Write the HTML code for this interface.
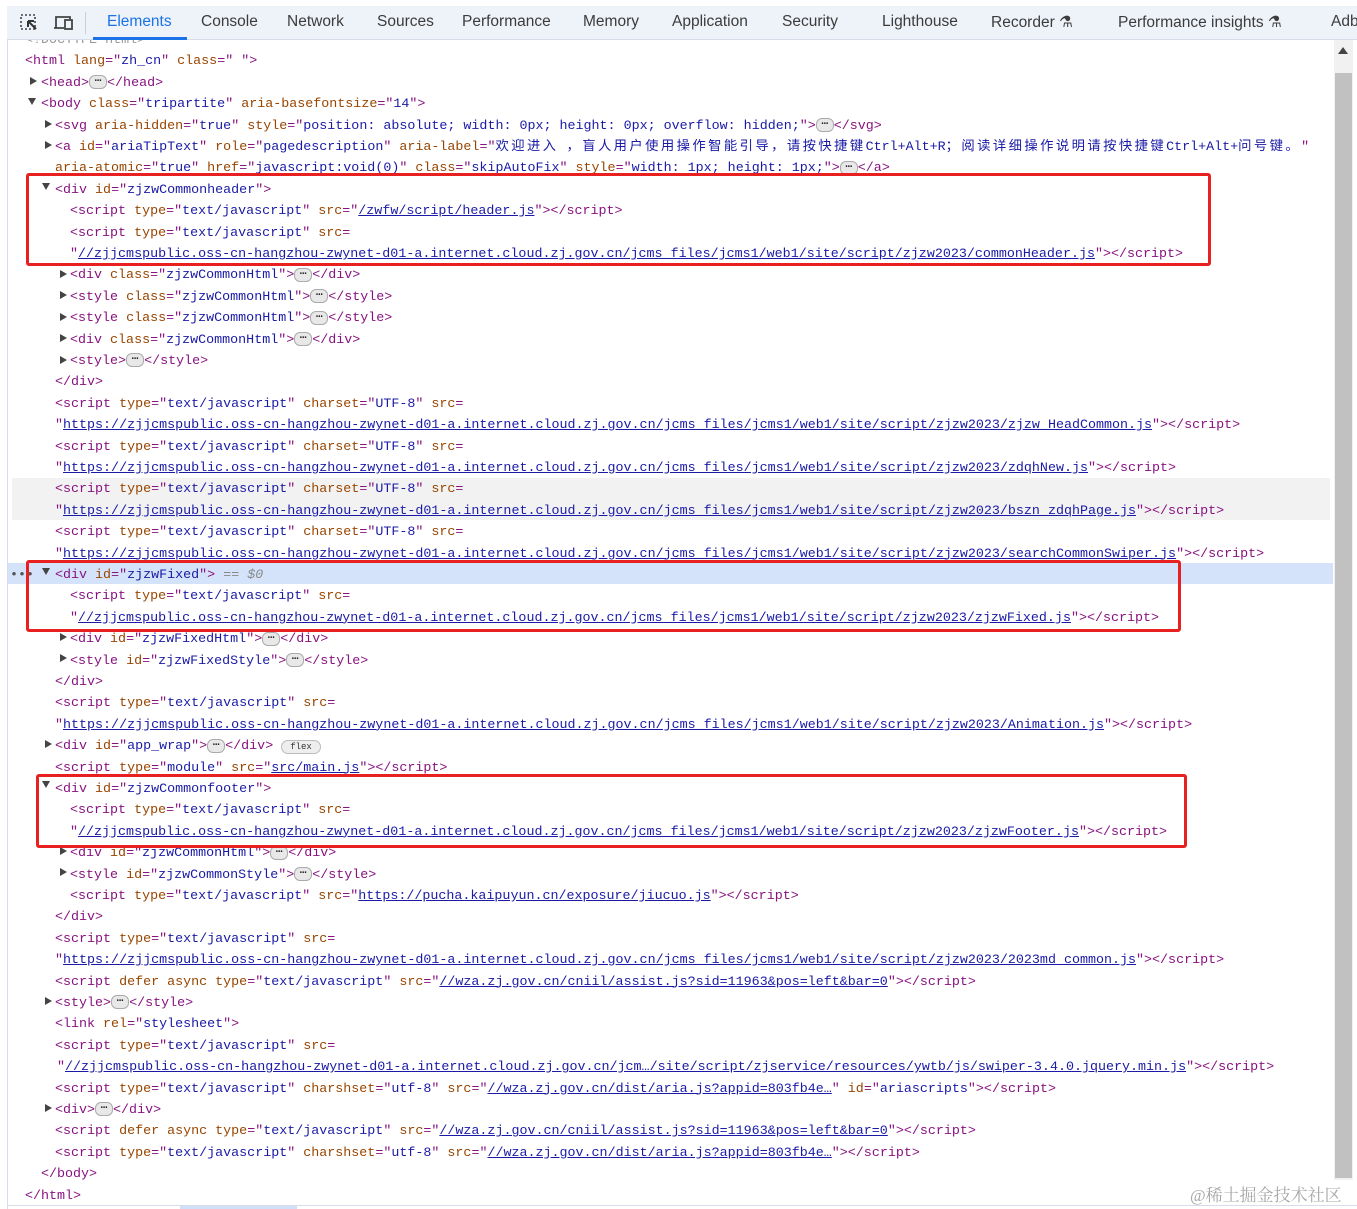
<!DOCTYPE html>
<html><head><meta charset="utf-8"><style>
body{margin:0;width:1357px;height:1209px;overflow:hidden;background:#fff;position:relative;font-family:"Liberation Mono","Noto Sans CJK SC",monospace;}
#bar{position:absolute;left:7px;top:6px;width:1350px;height:33px;background:#eef2f9;border-bottom:1px solid #d6dde8;z-index:5;font-family:"Liberation Sans",sans-serif;font-size:15.5px;color:#3c3c3c;}
#bar span{position:absolute;top:7px;white-space:nowrap}
#bar .act{color:#1a73e8}
#ul{position:absolute;left:86px;top:31px;width:94px;height:3px;background:#1a73e8}
#lb{position:absolute;left:7px;top:40px;width:1px;height:1169px;background:#d6dde8}
.l{position:absolute;margin-top:1px;height:21.4px;line-height:21.4px;font-size:13.35px;white-space:nowrap;color:#881280}
.t{color:#881280}.a{color:#994500}.v{color:#1a1aa6}.u{color:#1a1aa6;text-decoration:underline}
.cj{letter-spacing:2.4px}
.tr{position:absolute;width:0;height:0;border-top:4.5px solid transparent;border-bottom:4.5px solid transparent;border-left:7px solid #444}
.td{position:absolute;width:0;height:0;border-left:4.5px solid transparent;border-right:4.5px solid transparent;border-top:7px solid #444}
.e{display:inline-block;width:16px;height:12px;line-height:7px;border:1px solid #aaa;border-radius:6px;background:#e8e8e8;color:#222;font-size:11px;text-align:center;vertical-align:middle;font-weight:bold}
.box{position:absolute;border:3px solid #e8201f;border-radius:3px;z-index:3}
#sb{position:absolute;left:1334px;top:40px;width:19px;height:1140px;background:#f1f1f1}
#th{position:absolute;left:1335px;top:73px;width:17px;height:1105px;background:#c1c1c1}
</style></head><body>
<div id="bar">
<svg style="position:absolute;left:13px;top:8px" width="20" height="18" viewBox="0 0 20 18"><rect x="1" y="1" width="14" height="14" fill="none" stroke="#444" stroke-width="1.6" stroke-dasharray="2 2"/><path d="M8 7 L16 15 M8 7 L8 13 M8 7 L14 7" stroke="#333" stroke-width="2" fill="none"/></svg>
<svg style="position:absolute;left:46px;top:8px" width="22" height="18" viewBox="0 0 22 18"><path d="M3 14 V3 H17 V5 M1 14 H11" stroke="#444" stroke-width="1.8" fill="none"/><rect x="12" y="6" width="7" height="9" fill="none" stroke="#444" stroke-width="1.8"/></svg>
<div style="position:absolute;left:78px;top:6px;width:1px;height:22px;background:#ccd"></div>
<span class="act" style="left:100px">Elements</span>
<span style="left:194px">Console</span>
<span style="left:280px">Network</span>
<span style="left:370px">Sources</span>
<span style="left:455px">Performance</span>
<span style="left:576px">Memory</span>
<span style="left:665px">Application</span>
<span style="left:775px">Security</span>
<span style="left:875px">Lighthouse</span>
<span style="left:984px">Recorder ⚗</span>
<span style="left:1111px">Performance insights ⚗</span>
<span style="left:1324px">Adb</span>
<div id="ul"></div>
</div>
<div id="lb"></div>
<div id="sb"></div><div id="th"></div>
<svg style="position:absolute;left:1338px;top:47px" width="10" height="7"><path d="M0 7 L5 0 L10 7Z" fill="#444"/></svg>

<div style="position:absolute;left:12px;top:478px;width:1318px;height:42px;background:#f2f2f2"></div>
<div style="position:absolute;left:8px;top:563px;width:1325px;height:21px;background:#d4e3fa"></div>

<div class="l" style="left:25px;top:29px;color:#999">&lt;!DOCTYPE html&gt;</div>
<div class="l" style="left:25px;top:50.4px">&lt;html <span class="a">lang</span>="<span class="v">zh_cn</span>" <span class="a">class</span>="<span class="v"> </span>"&gt;</div>
<div class="tr" style="left:30px;top:77px"></div>
<div class="l" style="left:41px;top:71.8px">&lt;head&gt;<span class="e">…</span>&lt;/head&gt;</div>
<div class="td" style="left:28px;top:98px"></div>
<div class="l" style="left:41px;top:93.2px">&lt;body <span class="a">class</span>="<span class="v">tripartite</span>" <span class="a">aria-basefontsize</span>="<span class="v">14</span>"&gt;</div>
<div class="tr" style="left:45px;top:120px"></div>
<div class="l" style="left:55px;top:114.6px">&lt;svg <span class="a">aria-hidden</span>="<span class="v">true</span>" <span class="a">style</span>="<span class="v">position: absolute; width: 0px; height: 0px; overflow: hidden;</span>"&gt;<span class="e">…</span>&lt;/svg&gt;</div>
<div class="tr" style="left:45px;top:141px"></div>
<div class="l" style="left:55px;top:136px">&lt;a <span class="a">id</span>="<span class="v">ariaTipText</span>" <span class="a">role</span>="<span class="v">pagedescription</span>" <span class="a">aria-label</span>="<span class="v"><span class="cj">欢迎进入</span> <span class="cj">，盲人用户使用操作智能引导，请按快捷键</span>Ctrl+Alt+R<span class="cj">；阅读详细操作说明请按快捷键</span>Ctrl+Alt+<span class="cj">问号键。</span></span>"</div>
<div class="l" style="left:55px;top:157.4px"><span class="a">aria-atomic</span>="<span class="v">true</span>" <span class="a">href</span>="<span class="v">javascript:void(0)</span>" <span class="a">class</span>="<span class="v">skipAutoFix</span>" <span class="a">style</span>="<span class="v">width: 1px; height: 1px;</span>"&gt;<span class="e">…</span>&lt;/a&gt;</div>
<div class="td" style="left:42px;top:183px"></div>
<div class="l" style="left:55px;top:178.8px">&lt;div <span class="a">id</span>="<span class="v">zjzwCommonheader</span>"&gt;</div>
<div class="l" style="left:70px;top:200.2px">&lt;script <span class="a">type</span>="<span class="v">text/javascript</span>" <span class="a">src</span>="<span class="u">/zwfw/script/header.js</span>"&gt;&lt;/script&gt;</div>
<div class="l" style="left:70px;top:221.6px">&lt;script <span class="a">type</span>="<span class="v">text/javascript</span>" <span class="a">src</span>=</div>
<div class="l" style="left:70px;top:243px">"<span class="u">//zjjcmspublic.oss-cn-hangzhou-zwynet-d01-a.internet.cloud.zj.gov.cn/jcms_files/jcms1/web1/site/script/zjzw2023/commonHeader.js</span>"&gt;&lt;/script&gt;</div>
<div class="tr" style="left:60px;top:270px"></div>
<div class="l" style="left:70px;top:264.4px">&lt;div <span class="a">class</span>="<span class="v">zjzwCommonHtml</span>"&gt;<span class="e">…</span>&lt;/div&gt;</div>
<div class="tr" style="left:60px;top:291px"></div>
<div class="l" style="left:70px;top:285.8px">&lt;style <span class="a">class</span>="<span class="v">zjzwCommonHtml</span>"&gt;<span class="e">…</span>&lt;/style&gt;</div>
<div class="tr" style="left:60px;top:313px"></div>
<div class="l" style="left:70px;top:307.2px">&lt;style <span class="a">class</span>="<span class="v">zjzwCommonHtml</span>"&gt;<span class="e">…</span>&lt;/style&gt;</div>
<div class="tr" style="left:60px;top:334px"></div>
<div class="l" style="left:70px;top:328.6px">&lt;div <span class="a">class</span>="<span class="v">zjzwCommonHtml</span>"&gt;<span class="e">…</span>&lt;/div&gt;</div>
<div class="tr" style="left:60px;top:356px"></div>
<div class="l" style="left:70px;top:350px">&lt;style&gt;<span class="e">…</span>&lt;/style&gt;</div>
<div class="l" style="left:55px;top:371.4px">&lt;/div&gt;</div>
<div class="l" style="left:55px;top:392.8px">&lt;script <span class="a">type</span>="<span class="v">text/javascript</span>" <span class="a">charset</span>="<span class="v">UTF-8</span>" <span class="a">src</span>=</div>
<div class="l" style="left:55px;top:414.2px">"<span class="u">https://zjjcmspublic.oss-cn-hangzhou-zwynet-d01-a.internet.cloud.zj.gov.cn/jcms_files/jcms1/web1/site/script/zjzw2023/zjzw_HeadCommon.js</span>"&gt;&lt;/script&gt;</div>
<div class="l" style="left:55px;top:435.6px">&lt;script <span class="a">type</span>="<span class="v">text/javascript</span>" <span class="a">charset</span>="<span class="v">UTF-8</span>" <span class="a">src</span>=</div>
<div class="l" style="left:55px;top:457px">"<span class="u">https://zjjcmspublic.oss-cn-hangzhou-zwynet-d01-a.internet.cloud.zj.gov.cn/jcms_files/jcms1/web1/site/script/zjzw2023/zdqhNew.js</span>"&gt;&lt;/script&gt;</div>
<div class="l" style="left:55px;top:478.4px">&lt;script <span class="a">type</span>="<span class="v">text/javascript</span>" <span class="a">charset</span>="<span class="v">UTF-8</span>" <span class="a">src</span>=</div>
<div class="l" style="left:55px;top:499.8px">"<span class="u">https://zjjcmspublic.oss-cn-hangzhou-zwynet-d01-a.internet.cloud.zj.gov.cn/jcms_files/jcms1/web1/site/script/zjzw2023/bszn_zdqhPage.js</span>"&gt;&lt;/script&gt;</div>
<div class="l" style="left:55px;top:521.2px">&lt;script <span class="a">type</span>="<span class="v">text/javascript</span>" <span class="a">charset</span>="<span class="v">UTF-8</span>" <span class="a">src</span>=</div>
<div class="l" style="left:55px;top:542.6px">"<span class="u">https://zjjcmspublic.oss-cn-hangzhou-zwynet-d01-a.internet.cloud.zj.gov.cn/jcms_files/jcms1/web1/site/script/zjzw2023/searchCommonSwiper.js</span>"&gt;&lt;/script&gt;</div>
<div class="l" style="left:10px;top:564px;color:#555">•••</div>
<div class="td" style="left:42px;top:568px"></div>
<div class="l" style="left:55px;top:564px">&lt;div <span class="a">id</span>="<span class="v">zjzwFixed</span>"&gt; <span style="color:#888;font-style:italic">== $0</span></div>
<div class="l" style="left:70px;top:585.4px">&lt;script <span class="a">type</span>="<span class="v">text/javascript</span>" <span class="a">src</span>=</div>
<div class="l" style="left:70px;top:606.8px">"<span class="u">//zjjcmspublic.oss-cn-hangzhou-zwynet-d01-a.internet.cloud.zj.gov.cn/jcms_files/jcms1/web1/site/script/zjzw2023/zjzwFixed.js</span>"&gt;&lt;/script&gt;</div>
<div class="tr" style="left:60px;top:633px"></div>
<div class="l" style="left:70px;top:628.2px">&lt;div <span class="a">id</span>="<span class="v">zjzwFixedHtml</span>"&gt;<span class="e">…</span>&lt;/div&gt;</div>
<div class="tr" style="left:60px;top:654px"></div>
<div class="l" style="left:70px;top:649.6px">&lt;style <span class="a">id</span>="<span class="v">zjzwFixedStyle</span>"&gt;<span class="e">…</span>&lt;/style&gt;</div>
<div class="l" style="left:55px;top:671px">&lt;/div&gt;</div>
<div class="l" style="left:55px;top:692.4px">&lt;script <span class="a">type</span>="<span class="v">text/javascript</span>" <span class="a">src</span>=</div>
<div class="l" style="left:55px;top:713.8px">"<span class="u">https://zjjcmspublic.oss-cn-hangzhou-zwynet-d01-a.internet.cloud.zj.gov.cn/jcms_files/jcms1/web1/site/script/zjzw2023/Animation.js</span>"&gt;&lt;/script&gt;</div>
<div class="tr" style="left:45px;top:740px"></div>
<div class="l" style="left:55px;top:735.2px">&lt;div <span class="a">id</span>="<span class="v">app_wrap</span>"&gt;<span class="e">…</span>&lt;/div&gt; <span style="display:inline-block;border:1px solid #bbb;border-radius:8px;background:#eee;color:#333;font-size:9px;line-height:12px;padding:0 8px">flex</span></div>
<div class="l" style="left:55px;top:756.6px">&lt;script <span class="a">type</span>="<span class="v">module</span>" <span class="a">src</span>="<span class="u">src/main.js</span>"&gt;&lt;/script&gt;</div>
<div class="td" style="left:42px;top:781px"></div>
<div class="l" style="left:55px;top:778px">&lt;div <span class="a">id</span>="<span class="v">zjzwCommonfooter</span>"&gt;</div>
<div class="l" style="left:70px;top:799.4px">&lt;script <span class="a">type</span>="<span class="v">text/javascript</span>" <span class="a">src</span>=</div>
<div class="l" style="left:70px;top:820.8px">"<span class="u">//zjjcmspublic.oss-cn-hangzhou-zwynet-d01-a.internet.cloud.zj.gov.cn/jcms_files/jcms1/web1/site/script/zjzw2023/zjzwFooter.js</span>"&gt;&lt;/script&gt;</div>
<div class="tr" style="left:60px;top:847px"></div>
<div class="l" style="left:70px;top:842.2px">&lt;div <span class="a">id</span>="<span class="v">zjzwCommonHtml</span>"&gt;<span class="e">…</span>&lt;/div&gt;</div>
<div class="tr" style="left:60px;top:868px"></div>
<div class="l" style="left:70px;top:863.6px">&lt;style <span class="a">id</span>="<span class="v">zjzwCommonStyle</span>"&gt;<span class="e">…</span>&lt;/style&gt;</div>
<div class="l" style="left:70px;top:885px">&lt;script <span class="a">type</span>="<span class="v">text/javascript</span>" <span class="a">src</span>="<span class="u">https://pucha.kaipuyun.cn/exposure/jiucuo.js</span>"&gt;&lt;/script&gt;</div>
<div class="l" style="left:55px;top:906.4px">&lt;/div&gt;</div>
<div class="l" style="left:55px;top:927.8px">&lt;script <span class="a">type</span>="<span class="v">text/javascript</span>" <span class="a">src</span>=</div>
<div class="l" style="left:55px;top:949.2px">"<span class="u">https://zjjcmspublic.oss-cn-hangzhou-zwynet-d01-a.internet.cloud.zj.gov.cn/jcms_files/jcms1/web1/site/script/zjzw2023/2023md_common.js</span>"&gt;&lt;/script&gt;</div>
<div class="l" style="left:55px;top:970.6px">&lt;script <span class="a">defer async type</span>="<span class="v">text/javascript</span>" <span class="a">src</span>="<span class="u">//wza.zj.gov.cn/cniil/assist.js?sid=11963&amp;pos=left&amp;bar=0</span>"&gt;&lt;/script&gt;</div>
<div class="tr" style="left:45px;top:997px"></div>
<div class="l" style="left:55px;top:992px">&lt;style&gt;<span class="e">…</span>&lt;/style&gt;</div>
<div class="l" style="left:55px;top:1013.4px">&lt;link <span class="a">rel</span>="<span class="v">stylesheet</span>"&gt;</div>
<div class="l" style="left:55px;top:1034.8px">&lt;script <span class="a">type</span>="<span class="v">text/javascript</span>" <span class="a">src</span>=</div>
<div class="l" style="left:57px;top:1056.2px">"<span class="u">//zjjcmspublic.oss-cn-hangzhou-zwynet-d01-a.internet.cloud.zj.gov.cn/jcm…/site/script/zjservice/resources/ywtb/js/swiper-3.4.0.jquery.min.js</span>"&gt;&lt;/script&gt;</div>
<div class="l" style="left:55px;top:1077.6px">&lt;script <span class="a">type</span>="<span class="v">text/javascript</span>" <span class="a">charshset</span>="<span class="v">utf-8</span>" <span class="a">src</span>="<span class="u">//wza.zj.gov.cn/dist/aria.js?appid=803fb4e…</span>" <span class="a">id</span>="<span class="v">ariascripts</span>"&gt;&lt;/script&gt;</div>
<div class="tr" style="left:45px;top:1104px"></div>
<div class="l" style="left:55px;top:1099px">&lt;div&gt;<span class="e">…</span>&lt;/div&gt;</div>
<div class="l" style="left:55px;top:1120.4px">&lt;script <span class="a">defer async type</span>="<span class="v">text/javascript</span>" <span class="a">src</span>="<span class="u">//wza.zj.gov.cn/cniil/assist.js?sid=11963&amp;pos=left&amp;bar=0</span>"&gt;&lt;/script&gt;</div>
<div class="l" style="left:55px;top:1141.8px">&lt;script <span class="a">type</span>="<span class="v">text/javascript</span>" <span class="a">charshset</span>="<span class="v">utf-8</span>" <span class="a">src</span>="<span class="u">//wza.zj.gov.cn/dist/aria.js?appid=803fb4e…</span>"&gt;&lt;/script&gt;</div>
<div class="l" style="left:41px;top:1163.2px">&lt;/body&gt;</div>
<div class="l" style="left:25px;top:1184.6px">&lt;/html&gt;</div>

<div class="box" style="left:26px;top:173px;width:1179px;height:87px"></div>
<div class="box" style="left:26px;top:560px;width:1149px;height:66px"></div>
<div class="box" style="left:36px;top:774px;width:1145px;height:68px"></div>

<div style="position:absolute;left:7px;top:1205px;width:1350px;height:1px;background:#d6dde8"></div>
<div style="position:absolute;left:180px;top:1206px;width:117px;height:3px;background:#cfe0f8"></div>
<div style="position:absolute;left:1190px;top:1181px;font-family:'Liberation Serif','Noto Serif CJK SC',serif;font-size:17px;color:#a8a8a8;white-space:nowrap;z-index:6">@稀土掘金技术社区</div>
</body></html>
